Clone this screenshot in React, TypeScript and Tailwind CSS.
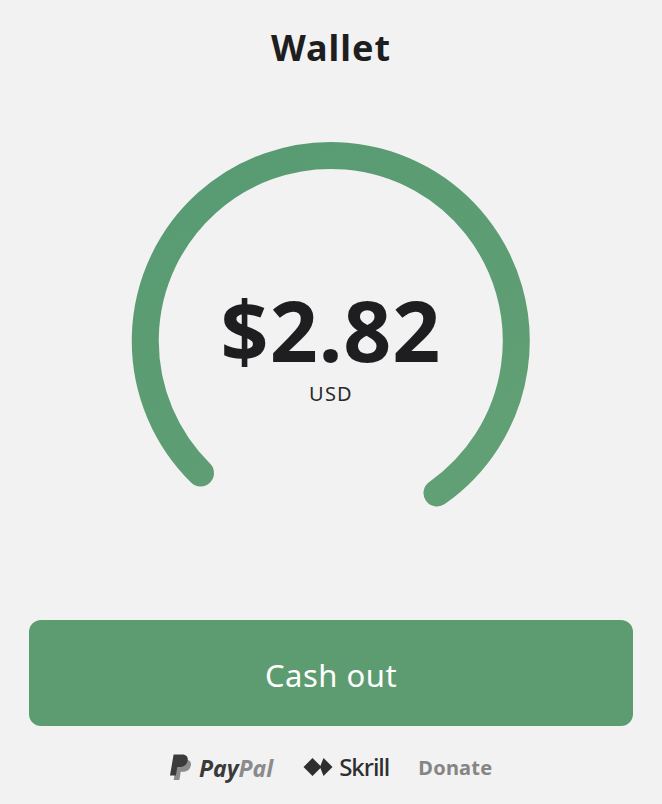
const font = { fontFamily: '"Noto Sans", "Liberation Sans", sans-serif' }

function PaypalMark() {
    return (
        <svg width="23" height="27" viewBox="0 0 23 27" className="block">
            <path
                d="M8 5.500h8.300c3.700 0 6.200 2 5.600 5.800-.7 4.400-3.800 6.500-7.800 6.500h-2.400l-1.300 8.200H4.700z"
                fill="#8b8b8b"
            />
            <path
                d="M4.600.5h8.400c3.800 0 6.300 2 5.700 5.800-.7 4.500-3.900 6.800-8 6.800H8.300l-1.400 8.400H1z"
                fill="#3b3b3b"
            />
        </svg>
    )
}

function SkrillMark() {
    return (
        <svg width="30" height="20" viewBox="0 0 30 20" className="block">
            <path d="M0.500 10 9.500 1l9 9-9 9z" fill="#2e2e2e" />
            <path d="M20.500 1 29.500 10l-9 9-3.500-9z" fill="#2e2e2e" />
        </svg>
    )
}

function Gauge() {
    return (
        <div className="relative mx-auto w-[400px] h-[400px]">
            <svg width="400" height="400" viewBox="0 0 400 400" className="block">
                <defs>
                    <linearGradient id="arc" x1="0" y1="0" x2="0.6" y2="1">
                        <stop offset="0" stopColor="#579a72" />
                        <stop offset="1" stopColor="#619f74" />
                    </linearGradient>
                </defs>
                <path
                    d="M69.500 333 A185.500 185.500 0 1 1 306 353"
                    fill="none"
                    stroke="url(#arc)"
                    strokeWidth="27"
                    strokeLinecap="round"
                />
            </svg>
            <div className="absolute inset-0 flex flex-col items-center">
                <div className="mt-[146px] h-[88px] text-[84px] leading-[88px] font-bold text-[#1e1e20] tracking-[1px]">
                    $2.82
                </div>
                <div className="mt-[8px] text-[20px] leading-6 text-[#2a2a2c] tracking-[1.2px]">USD</div>
            </div>
        </div>
    )
}

export default function App() {
    return (
        <div className="w-[662px] h-[804px] bg-[#f2f2f2] flex flex-col overflow-hidden" style={font}>
            <h1 className="mt-[27px] h-[42px] text-center text-[36px] leading-[42px] font-bold text-[#1e1e20] tracking-[1px]">
                Wallet
            </h1>
            <div className="mt-[71px]">
                <Gauge />
            </div>
            <button className="mx-[29px] mt-[80px] h-[106px] rounded-[12px] bg-[#5d9c70] pt-[4px] text-white text-[31px] tracking-[0.5px]">
                Cash out
            </button>
            <div className="mt-[26px] ml-[169px] flex items-center">
                <PaypalMark />
                <span className="ml-[7px] pt-[2px] text-[23px] leading-7 font-bold italic text-[#3a3a3a]">
                    Pay<span className="text-[#8b8b8b]">Pal</span>
                </span>
                <span className="ml-[30px]">
                    <SkrillMark />
                </span>
                <span className="ml-[6px] text-[24px] leading-7 font-medium text-[#2e2e2e] tracking-[-1px]">Skrill</span>
                <span className="ml-[29px] pt-[2px] text-[20px] leading-7 font-bold text-[#858585] tracking-[0.2px]">Donate</span>
            </div>
        </div>
    )
}
